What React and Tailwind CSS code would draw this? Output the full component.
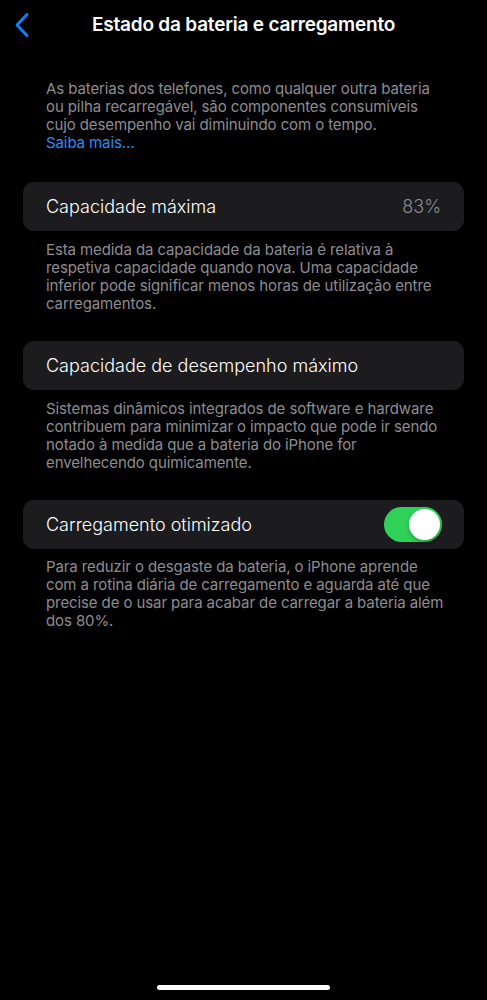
export default function App() {
  const font = { fontFamily: 'Inter, "Noto Sans", "Liberation Sans", sans-serif' };
  return (
    <div className="h-[1000px] w-full bg-black flex flex-col text-white" style={font}>
      <div className="relative h-[50px] flex items-center justify-center shrink-0">
        <div className="absolute left-[13px] top-[12px]">
          <svg width="18" height="26" viewBox="0 0 18 26" fill="none">
            <path d="M14 2.5 L4 13 L14 23.5" stroke="#0a84ff" strokeWidth="2.8" strokeLinecap="round" strokeLinejoin="round" />
          </svg>
        </div>
        <h1 className="text-[19px] font-semibold tracking-[-0.2px]">Estado da bateria e carregamento</h1>
      </div>

      <p className="mt-[30px] pl-[46px] pr-[42px] text-[15px] leading-[18px] text-[#8d8d93] tracking-[-0.1px]">
        As baterias dos telefones, como qualquer outra bateria ou pilha recarregável, são componentes consumíveis cujo desempenho vai diminuindo com o tempo.
        <br />
        <span className="text-[#2f8cf5]">Saiba mais…</span>
      </p>

      <div className="mt-[30px] mx-[23px] h-[49px] rounded-[11px] bg-[#1c1c1e] px-[23px] flex items-center justify-between">
        <span className="text-[18px] font-light tracking-[0px]">Capacidade máxima</span>
        <span className="text-[18px] font-light text-[#8d8d93]">83%</span>
      </div>
      <p className="mt-[10px] pl-[46px] pr-[42px] text-[15px] leading-[18px] text-[#8d8d93] tracking-[-0.1px]">
        Esta medida da capacidade da bateria é relativa à respetiva capacidade quando nova. Uma capacidade inferior pode significar menos horas de utilização entre carregamentos.
      </p>

      <div className="mt-[28px] mx-[23px] h-[49px] rounded-[11px] bg-[#1c1c1e] px-[23px] flex items-center">
        <span className="text-[18px] font-light tracking-[0px]">Capacidade de desempenho máximo</span>
      </div>
      <p className="mt-[10px] pl-[46px] pr-[42px] text-[15px] leading-[18px] text-[#8d8d93] tracking-[-0.1px]">
        Sistemas dinâmicos integrados de software e hardware contribuem para minimizar o impacto que pode ir sendo notado à medida que a bateria do iPhone for envelhecendo quimicamente.
      </p>

      <div className="mt-[28px] mx-[23px] h-[49px] rounded-[11px] bg-[#1c1c1e] pl-[23px] pr-[22px] flex items-center justify-between">
        <span className="text-[18px] font-light tracking-[0px]">Carregamento otimizado</span>
        <div className="w-[58px] h-[35px] rounded-full bg-[#30d158] p-[2px] flex justify-end">
          <div className="w-[31px] h-[31px] rounded-full bg-white shadow-[0_2px_4px_rgba(0,0,0,0.25)]" />
        </div>
      </div>
      <p className="mt-[9px] pl-[46px] pr-[42px] text-[15px] leading-[18px] text-[#8d8d93] tracking-[-0.1px]">
        Para reduzir o desgaste da bateria, o iPhone aprende com a rotina diária de carregamento e aguarda até que precise de o usar para acabar de carregar a bateria além dos 80%.
      </p>

      <div className="mt-auto mb-[10px] flex justify-center">
        <div className="w-[173px] h-[5px] rounded-full bg-white" />
      </div>
    </div>
  );
}
